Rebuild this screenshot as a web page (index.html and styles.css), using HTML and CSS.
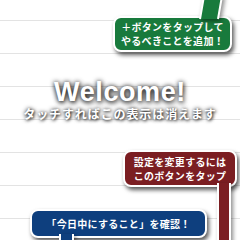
FILE: index.html
```html
<!DOCTYPE html>
<html lang="ja">
<head>
<meta charset="utf-8">
<link rel="stylesheet" href="styles.css">
</head>
<body>
<div class="screen">
  <ul class="list">
    <li class="row row-first"></li>
    <li class="row"></li>
    <li class="row"></li>
    <li class="row"></li>
    <li class="row"></li>
    <li class="row"></li>
    <li class="row"></li>
    <li class="row"></li>
  </ul>

  <div class="welcome">
    <div class="welcome-title">Welcome!</div>
    <div class="welcome-sub">タッチすればこの表示は消えます</div>
  </div>

  <div class="tip tip-green">
    <div class="bubble">＋ボタンをタップして<br>やるべきことを追加！</div>
    <svg class="tail tail-green" width="40" height="26" viewBox="0 0 40 26">
      <path d="M5 24 L9 1 L27 1 L23 24" />
    </svg>
  </div>

  <div class="tip tip-red">
    <div class="bubble">設定を変更するには<br>このボタンをタップ</div>
    <svg class="tail tail-red" width="16" height="60" viewBox="0 0 16 60">
      <path d="M2 0 L2 60 L14 60 L14 0" />
    </svg>
  </div>

  <div class="tip tip-blue">
    <div class="bubble">「今日中にすること」を確認！</div>
    <svg class="tail tail-blue" width="18" height="12" viewBox="0 0 18 12">
      <path d="M2 0 L2 12 L15 12 L15 0" />
    </svg>
  </div>
</div>
</body>
</html>
```

FILE: styles.css
```css
html, body {
  margin: 0;
  padding: 0;
  background: #ffffff;
}

.screen {
  position: relative;
  width: 240px;
  height: 240px;
  overflow: hidden;
  background: #ffffff;
  font-family: "Noto Sans CJK JP", "Noto Sans", sans-serif;
}

.list {
  list-style: none;
  margin: 0;
  padding: 0;
}

.row {
  height: 32px;
  border-bottom: 1px solid #e3e3e3;
}

.row-first {
  height: 20px;
}

.welcome {
  position: absolute;
  left: 0;
  right: 0;
  top: 77px;
  display: flex;
  flex-direction: column;
  align-items: center;
  color: #ffffff;
}

.welcome-title {
  font-family: "Liberation Sans", Arial, sans-serif;
  font-weight: 700;
  font-size: 27px;
  line-height: 30px;
  letter-spacing: 0.6px;
  text-shadow: 0 0 5px rgba(0, 0, 0, 0.85), 1px 2px 5px rgba(0, 0, 0, 0.7);
}

.welcome-sub {
  font-weight: 700;
  font-size: 12px;
  line-height: 14px;
  letter-spacing: 0.9px;
  text-shadow: 0 0 4px rgba(0, 0, 0, 0.9), 1px 1px 3px rgba(0, 0, 0, 0.7);
}

.tip {
  position: absolute;
}

.bubble {
  position: relative;
  box-sizing: border-box;
  display: flex;
  align-items: center;
  justify-content: center;
  text-align: center;
  color: #ffffff;
  font-weight: 700;
  font-size: 10px;
  letter-spacing: 0.3px;
  border: 2px solid #ffffff;
  border-radius: 8px;
  box-shadow: 2px 3px 4px rgba(0, 0, 0, 0.65);
}

.tail {
  position: absolute;
  overflow: visible;
  filter: drop-shadow(2px 2px 2px rgba(0, 0, 0, 0.45));
}

.tail path {
  stroke: #ffffff;
  stroke-width: 2;
  stroke-linejoin: round;
}

.tip-green {
  left: 113px;
  top: 16px;
}

.tip-green .bubble {
  width: 119px;
  height: 36px;
  background: #187a3c;
  line-height: 14px;
}

.tail-green {
  left: 82px;
  top: -21px;
}

.tail-green path {
  fill: #187a3c;
}

.tip-red {
  left: 123px;
  top: 150px;
}

.tip-red .bubble {
  width: 114px;
  height: 37px;
  background: #7b1e22;
  line-height: 14px;
}

.tail-red {
  left: 93px;
  top: 33px;
}

.tail-red path {
  fill: #7b1e22;
}

.tip-blue {
  left: 30px;
  top: 209px;
}

.tip-blue .bubble {
  width: 177px;
  height: 29px;
  background: #0e3f7e;
  line-height: 14px;
}

.tail-blue {
  left: 28px;
  top: 25px;
}

.tail-blue path {
  fill: #0e3f7e;
}
```
